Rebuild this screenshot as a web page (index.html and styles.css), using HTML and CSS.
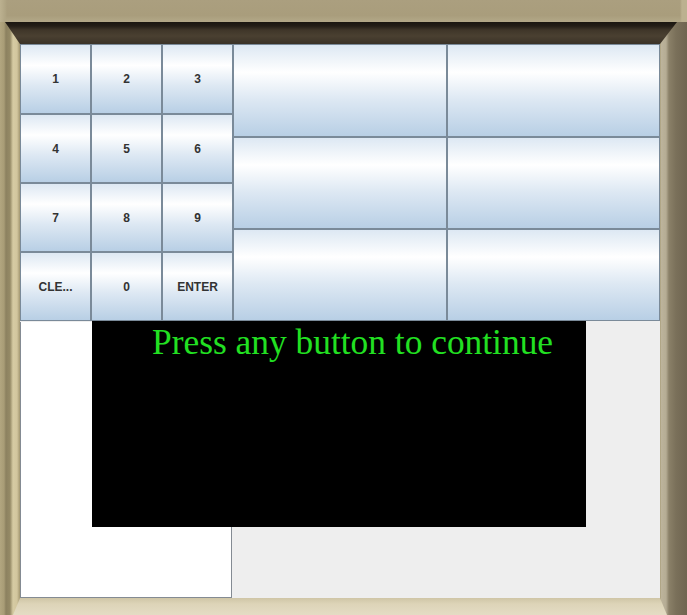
FILE: index.html
```html
<!DOCTYPE html>
<html>
<head>
<meta charset="utf-8">
<link rel="stylesheet" href="styles.css">
</head>
<body>
<div class="frame">
  <div class="top-band"></div>
  <div class="shade"></div>
  <div class="middle">
    <div class="panel">
      <div class="top-row">
        <div class="keypad">
          <div class="btn">1</div>
          <div class="btn">2</div>
          <div class="btn">3</div>
          <div class="btn">4</div>
          <div class="btn">5</div>
          <div class="btn">6</div>
          <div class="btn">7</div>
          <div class="btn">8</div>
          <div class="btn">9</div>
          <div class="btn">CLE...</div>
          <div class="btn">0</div>
          <div class="btn">ENTER</div>
        </div>
        <div class="options">
          <div class="btn"></div>
          <div class="btn"></div>
          <div class="btn"></div>
          <div class="btn"></div>
          <div class="btn"></div>
          <div class="btn"></div>
        </div>
      </div>
      <div class="bottom-row">
        <div class="white-box"></div>
        <div class="gray-area"></div>
        <div class="screen">
          <div class="message">Press any button to continue</div>
        </div>
      </div>
    </div>
  </div>
  <div class="bottom-band"></div>
</div>
</body>
</html>
```
FILE: styles.css
```css
html, body {
  margin: 0;
  padding: 0;
  background: #8a8068;
}
.frame {
  width: 687px;
  height: 615px;
  display: flex;
  flex-direction: column;
  overflow: hidden;
  background: linear-gradient(to right,
    #b2a680 0px, #a89c76 4px, #8c8160 6px, #958a66 10px, #d6cba3 13px, #d2c69e 17px, #a39770 20px,
    #a39770 660px, #bdb49c 661px, #b5ac94 666px, #8a8068 669px, #7a705a 676px, #6f6550 687px);
}
.top-band {
  height: 22px;
  flex: none;
  background:
    linear-gradient(to right, #bcb190 0px, #b0a584 5px, rgba(170,158,126,0) 7px, rgba(170,158,126,0) 680px, #bcb190 682px),
    linear-gradient(to bottom, #ab9f7f 0%, #a99d7c 70%, #b3a888 100%);
}
.shade {
  height: 22px;
  flex: none;
  background: linear-gradient(to bottom, #1a1611 0px, #241e17 4px, #3f3629 8px, #4a4031 14px, #3a3227 22px);
  clip-path: polygon(5px 0, 677px 0, 660px 100%, 20px 100%);
}
.middle {
  height: 554px;
  flex: none;
  display: flex;
  padding: 0 27px 0 20px;
}
.panel {
  flex: 1;
  display: flex;
  flex-direction: column;
  background: #eeeeee;
}
.top-row {
  height: 277px;
  flex: none;
  display: flex;
}
.keypad {
  width: 213px;
  flex: none;
  display: grid;
  grid-template-columns: repeat(3, 1fr);
  grid-template-rows: 70px 69px 69px 69px;
}
.options {
  flex: 1;
  display: grid;
  grid-template-columns: repeat(2, 1fr);
  grid-template-rows: 93px 92px 92px;
}
.btn {
  box-sizing: border-box;
  border: 1px solid #7a8a99;
  background: linear-gradient(to bottom, #dde8f3 0%, #ffffff 30%, #dde8f3 60%, #b8cfe5 100%);
  display: flex;
  align-items: center;
  justify-content: center;
  font-family: "Liberation Sans", Arial, sans-serif;
  font-weight: bold;
  font-size: 12px;
  color: #333333;
}
.bottom-row {
  height: 277px;
  flex: none;
  display: flex;
  position: relative;
}
.white-box {
  width: 212px;
  flex: none;
  box-sizing: border-box;
  background: #ffffff;
  border: 1px solid #848b93;
  border-top: none;
  margin-top: 1px;
}
.gray-area {
  flex: 1;
}
.screen {
  position: absolute;
  left: 72px;
  top: 0;
  width: 494px;
  height: 206px;
  background: #000000;
}
.message {
  padding-left: 60px;
  font-family: "Liberation Serif", "Times New Roman", serif;
  font-size: 35.4px;
  line-height: 42px;
  color: #22e022;
  white-space: nowrap;
}
.bottom-band {
  height: 17px;
  flex: none;
  background: linear-gradient(to bottom, #cfc5a6 0px, #ddd4b8 6px, #e4dcc4 17px);
  clip-path: polygon(20px 0, 660px 0, 667px 100%, 13px 100%);
}
```
